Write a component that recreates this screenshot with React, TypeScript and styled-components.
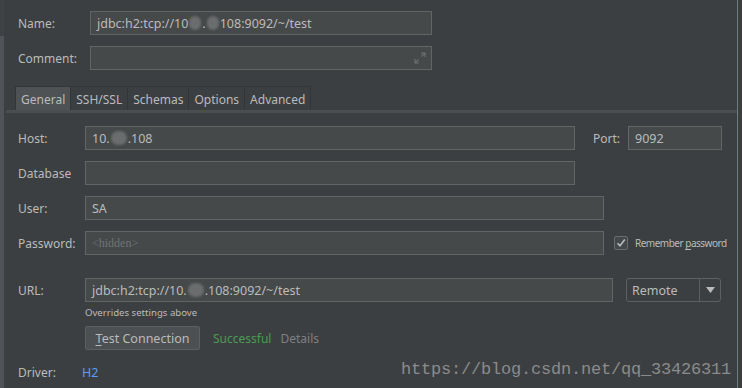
import React from "react";
import styled, { createGlobalStyle } from "styled-components";

const GlobalStyle = createGlobalStyle`
  html, body {
    margin: 0;
    padding: 0;
    background: #3c3f41;
  }
  body {
    font-family: "Noto Sans", "Open Sans", sans-serif;
    font-size: 12px;
    color: #bbbbbb;
  }
`;

const Page = styled.div`
  position: relative;
  width: 742px;
  height: 388px;
  display: flex;
  background: #3c3f41;
  overflow: hidden;
`;

const LeftStrip = styled.div`
  width: 4px;
  display: flex;
  flex-direction: column;

  &::before {
    content: "";
    height: 36px;
    background: #3f4244;
  }
  &::after {
    content: "";
    flex: 1;
    background: #505459;
  }
`;

const Content = styled.div`
  width: 733px;
  display: flex;
  flex-direction: column;
`;

const RightEdge = styled.div`
  width: 5px;
  border-left: 1px solid #9b59b6;
  background: #3c3f41;
  box-sizing: border-box;
`;

const Header = styled.div`
  display: flex;
  flex-direction: column;
  gap: 11px;
  padding: 11px 0 0 14px;
`;

const Row = styled.div`
  display: flex;
  align-items: center;
  height: 24px;
`;

const Label = styled.span<{ $w: number }>`
  width: ${(p) => p.$w}px;
  flex-shrink: 0;
  font-size: 12px;
  color: #bbbbbb;
  white-space: nowrap;
`;

const Field = styled.div<{ $w: number }>`
  position: relative;
  flex-shrink: 0;
  width: ${(p) => p.$w}px;
  height: 24px;
  box-sizing: border-box;
  background: #45494a;
  border: 1px solid #646464;
  display: flex;
  align-items: center;
  padding-left: 6px;
  font-size: 12.5px;
  color: #bbbbbb;
  white-space: nowrap;
`;

const Blur = styled.span<{ $w: number }>`
  display: inline-block;
  width: ${(p) => p.$w}px;
  height: 14px;
  margin: 0 1px;
  border-radius: 7px;
  background: #6a6c6d;
  vertical-align: middle;
  filter: blur(1px);
`;

const ExpandIcon = styled.svg`
  position: absolute;
  right: 5px;
  top: 5px;
`;

const Hidden = styled.span`
  font-family: "Liberation Serif", serif;
  font-size: 12px;
  color: #727272;
`;

const TabBar = styled.div`
  display: flex;
  margin: 16px 0 0 11px;
  height: 24px;
`;

const Tab = styled.div<{ $active?: boolean }>`
  display: flex;
  align-items: center;
  padding: 1px 5px 0;
  box-sizing: border-box;
  font-size: 12px;
  color: #bbbbbb;
  background: ${(p) => (p.$active ? "#4e5254" : "#3c3f41")};
  border: 1px solid #333537;
  border-bottom: none;
  & + & {
    border-left: none;
  }
`;

const TabLine = styled.div`
  height: 3px;
  margin-left: 2px;
  background: #4a4e51;
`;

const Panel = styled.div`
  display: flex;
  flex-direction: column;
  padding: 13px 0 0 14px;
`;

const Rows = styled.div`
  display: flex;
  flex-direction: column;
  gap: 11px;
`;

const PortLabel = styled.span`
  margin: 0 8px 0 18px;
  font-size: 12px;
  color: #bbbbbb;
`;

const CheckWrap = styled.label`
  display: flex;
  align-items: center;
  gap: 7px;
  margin-left: 10px;
  font-size: 10px;
  letter-spacing: -0.5px;
  color: #bbbbbb;
  white-space: nowrap;
  flex-shrink: 0;
  u {
    text-underline-offset: 2px;
  }
`;

const Checkbox = styled.span`
  width: 14px;
  height: 14px;
  box-sizing: border-box;
  border: 1px solid #6b6b6b;
  border-radius: 2px;
  background: #43494a;
  display: flex;
  align-items: center;
  justify-content: center;
`;

const UrlRow = styled(Row)`
  margin-top: 23px;
`;

const Combo = styled.div`
  margin-left: 13px;
  width: 95px;
  height: 24px;
  box-sizing: border-box;
  border: 1px solid #5e6060;
  border-radius: 3px;
  display: flex;
  align-items: center;
  font-size: 12.5px;
  color: #bbbbbb;

  span {
    flex: 1;
    padding-left: 5px;
  }
  i {
    width: 20px;
    height: 100%;
    border-left: 1px solid #5e6060;
    display: flex;
    align-items: center;
    justify-content: center;
  }
`;

const Hint = styled.div`
  margin: 4px 0 0 67px;
  font-size: 9.6px;
  color: #bbbbbb;
  height: 14px;
`;

const ActionRow = styled.div`
  display: flex;
  align-items: center;
  margin: 6px 0 0 67px;
  height: 24px;
`;

const Button = styled.div`
  width: 115px;
  height: 24px;
  box-sizing: border-box;
  background: #4c5052;
  border: 1px solid #5e6060;
  border-radius: 2px;
  display: flex;
  align-items: center;
  justify-content: center;
  font-size: 12.5px;
  color: #bbbbbb;
  u {
    text-underline-offset: 2px;
  }
`;

const Status = styled.span<{ $color: string; $gap: number }>`
  margin-left: ${(p) => p.$gap}px;
  font-size: 12px;
  color: ${(p) => p.$color};
`;

const DriverRow = styled.div`
  display: flex;
  align-items: center;
  margin-top: 13px;
  height: 18px;
`;

const Link = styled.span`
  margin-left: -3px;
  font-size: 12.5px;
  color: #589df6;
`;

const Watermark = styled.div`
  position: absolute;
  left: 401px;
  top: 360px;
  font-family: "Liberation Mono", monospace;
  font-size: 17px;
  letter-spacing: -0.2px;
  color: #8a8b8c;
  white-space: nowrap;
`;

export default function App() {
  return (
    <Page>
      <GlobalStyle />
      <LeftStrip />
      <Content>
        <Header>
          <Row>
            <Label $w={72}>Name:</Label>
            <Field $w={342}>
              jdbc:h2:tcp://10
              <Blur $w={12} />.<Blur $w={12} />
              108:9092/~/test
            </Field>
          </Row>
          <Row>
            <Label $w={72}>Comment:</Label>
            <Field $w={342}>
              <ExpandIcon width="12" height="12" viewBox="0 0 12 12">
                <path
                  d="M7 1h4v4M11 1L7.5 4.5M5 11H1V7M1 11l3.5-3.5"
                  stroke="#6e6e6e"
                  strokeWidth="1.2"
                  fill="none"
                />
              </ExpandIcon>
            </Field>
          </Row>
        </Header>

        <TabBar>
          <Tab $active>General</Tab>
          <Tab>SSH/SSL</Tab>
          <Tab>Schemas</Tab>
          <Tab>Options</Tab>
          <Tab>Advanced</Tab>
        </TabBar>
        <TabLine />

        <Panel>
          <Rows>
            <Row>
              <Label $w={67}>Host:</Label>
              <Field $w={490}>
                10.
                <Blur $w={16} />
                .108
              </Field>
              <PortLabel>Port:</PortLabel>
              <Field $w={94}>9092</Field>
            </Row>
            <Row>
              <Label $w={67}>Database</Label>
              <Field $w={490} />
            </Row>
            <Row>
              <Label $w={67}>User:</Label>
              <Field $w={519}>SA</Field>
            </Row>
            <Row>
              <Label $w={67}>Password:</Label>
              <Field $w={519}>
                <Hidden>&lt;hidden&gt;</Hidden>
              </Field>
              <CheckWrap>
                <Checkbox>
                  <svg width="10" height="10" viewBox="0 0 10 10">
                    <path
                      d="M1.5 5.2L4 7.8L8.8 1.6"
                      stroke="#bbbbbb"
                      strokeWidth="1.6"
                      fill="none"
                    />
                  </svg>
                </Checkbox>
                <span>
                  Remember <u>p</u>assword
                </span>
              </CheckWrap>
            </Row>
          </Rows>

          <UrlRow>
            <Label $w={67}>URL:</Label>
            <Field $w={528}>
              jdbc:h2:tcp://10.
              <Blur $w={16} />
              .108:9092/~/test
            </Field>
            <Combo>
              <span>Remote</span>
              <i>
                <svg width="9" height="6" viewBox="0 0 9 6">
                  <path d="M0 0h9L4.5 6z" fill="#bbbbbb" />
                </svg>
              </i>
            </Combo>
          </UrlRow>
          <Hint>Overrides settings above</Hint>
          <ActionRow>
            <Button>
              <span>
                <u>T</u>est Connection
              </span>
            </Button>
            <Status $color="#499c54" $gap={13}>
              Successful
            </Status>
            <Status $color="#808080" $gap={9}>
              Details
            </Status>
          </ActionRow>
          <DriverRow>
            <Label $w={67}>Driver:</Label>
            <Link>H2</Link>
          </DriverRow>
        </Panel>
      </Content>
      <RightEdge />
      <Watermark>https://blog.csdn.net/qq_33426311</Watermark>
    </Page>
  );
}
